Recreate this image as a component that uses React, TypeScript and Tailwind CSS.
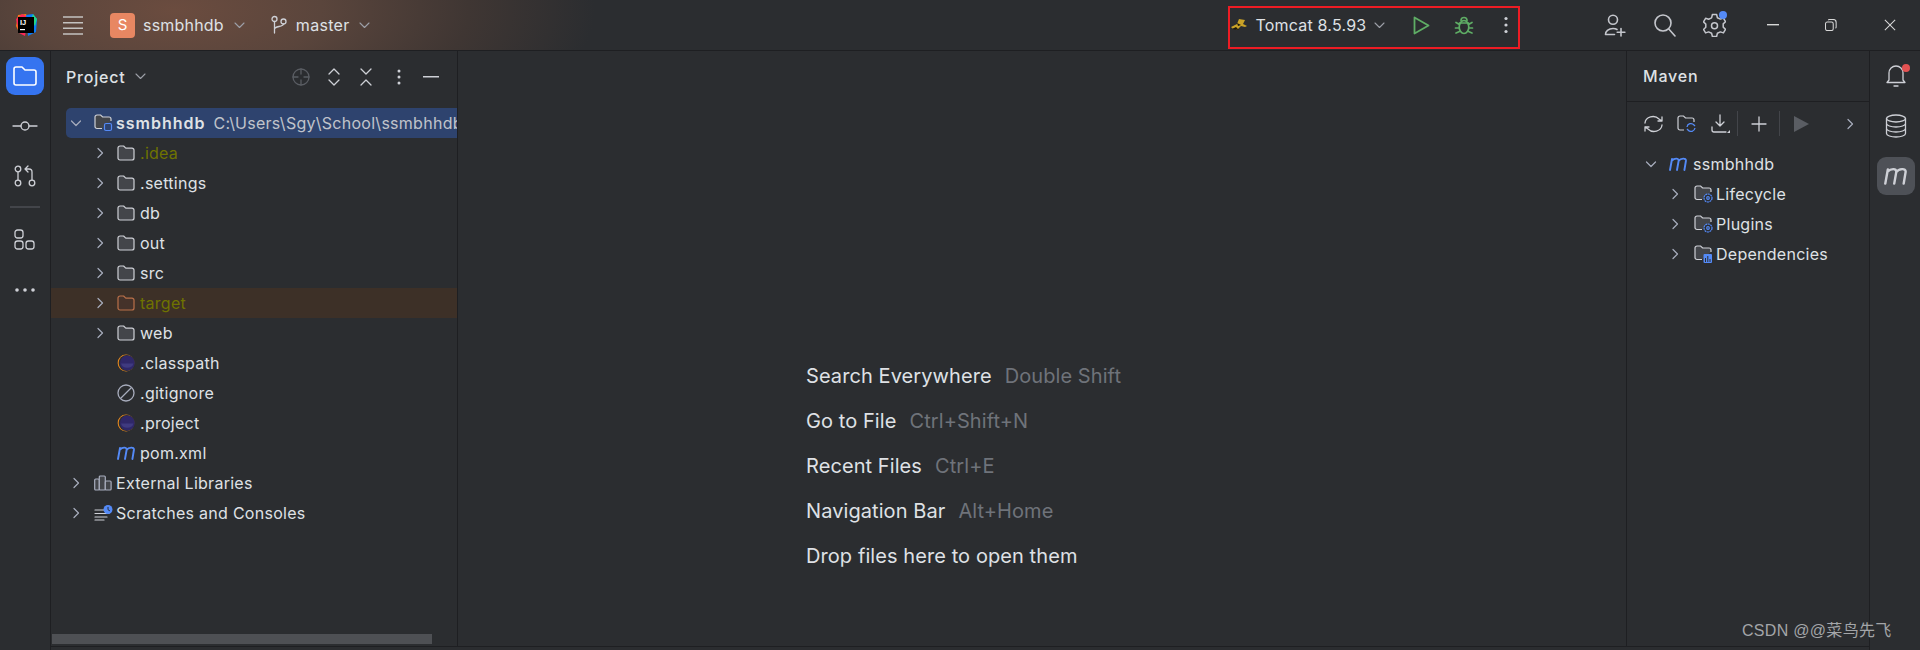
import React from "react";

const S = "#ced0d6";
type P = { className?: string };

const Svg = ({ w = 20, h = 20, vb, children, className }: { w?: number; h?: number; vb?: string; children: React.ReactNode; className?: string }) => (
  <svg width={w} height={h} viewBox={vb ?? `0 0 ${w} ${h}`} fill="none" stroke={S} strokeWidth={1.3} strokeLinecap="round" strokeLinejoin="round" className={`shrink-0 ${className ?? ""}`}>
    {children}
  </svg>
);

const Chevron = ({ open }: { open?: boolean }) => (
  <svg width={12} height={12} viewBox="0 0 12 12" fill="none" stroke="#a8adbd" strokeWidth={1.2} strokeLinecap="round" strokeLinejoin="round" className="shrink-0">
    {open ? <path d="M1.5 4 6 8.5 10.5 4" /> : <path d="M4 1.5 8.5 6 4 10.5" />}
  </svg>
);

const ChevDown = ({ className }: P) => (
  <svg width={11} height={7} viewBox="0 0 11 7" fill="none" stroke="#9da0a8" strokeWidth={1.1} strokeLinecap="round" strokeLinejoin="round" className={`shrink-0 ${className ?? ""}`}>
    <path d="M1 1 5.5 5.5 10 1" />
  </svg>
);

const Folder = ({ stroke = "#ced0d6", fill = "#43454a" }: { stroke?: string; fill?: string }) => (
  <svg width={18} height={16} viewBox="0 0 18 16" fill={fill} stroke={stroke} strokeWidth={1.2} strokeLinejoin="round" className="shrink-0">
    <path d="M1 3a2 2 0 0 1 2-2h3.6l2.2 2.2H15a2 2 0 0 1 2 2V13a2 2 0 0 1-2 2H3a2 2 0 0 1-2-2z" />
  </svg>
);

const BadgeFolder = ({ badge }: { badge: "module" | "gear" | "deps" }) => (
  <svg width={19} height={18} viewBox="0 0 19 18" fill="none" className="shrink-0">
    <path d="M8 14.5H3a2 2 0 0 1-2-2V3a2 2 0 0 1 2-2h3.6l2 2H15a2 2 0 0 1 2 2v2" stroke="#ced0d6" strokeWidth={1.2} fill="#43454a" />
    {badge === "module" && <rect x="10.5" y="9.5" width="7" height="7" rx="1.5" fill="#2e436e" stroke="#548af7" strokeWidth={1.2} />}
    {badge === "gear" && (
      <g stroke="#548af7" fill="#2b2d30" strokeWidth={1.2}>
        <circle cx="14" cy="13" r="4" strokeDasharray="2 0.6" />
        <circle cx="14" cy="13" r="1.3" />
      </g>
    )}
    {badge === "deps" && (
      <g fill="#548af7">
        <rect x="9.5" y="9" width="8.5" height="9" rx="1" />
        <path d="M11.5 17v-4M13.8 17v-6M16 17v-3" stroke="#2b2d30" strokeWidth={1} />
      </g>
    )}
  </svg>
);

const MavenM = ({ color = "#548af7", w = 18 }: { color?: string; w?: number }) => (
  <svg width={w} height={w * 0.75} viewBox="0 0 18 13.5" fill="none" stroke={color} strokeWidth={1.9} strokeLinecap="round" strokeLinejoin="round" className="shrink-0">
    <path d="M1 13 3 2M3 3.5C5 1.5 10 .4 9.600 4L8 13M9.600 4C11.500 1.400 17.400 .4 16.900 4L15.400 13" />
  </svg>
);

const Eclipse = () => (
  <svg width={18} height={18} viewBox="0 0 18 18" className="shrink-0">
    <circle cx="9" cy="9" r="8.4" fill="#e8891d" />
    <circle cx="9.7" cy="9" r="8" fill="#2b2d30" />
    <circle cx="10.3" cy="9" r="7.4" fill="#2f2768" />
    <path d="M4 9.5h12.5a6.5 6 0 0 1-12.5 0z" fill="#3f3a80" />
  </svg>
);

const Ignore = () => (
  <svg width={18} height={18} viewBox="0 0 18 18" fill="none" stroke="#a8adbd" strokeWidth={1.3} className="shrink-0">
    <circle cx="9" cy="9" r="8" />
    <path d="M3.5 14.5 14.5 3.5" />
  </svg>
);

const Libs = () => (
  <svg width={18} height={16} viewBox="0 0 18 16" fill="none" stroke="#a8adbd" strokeWidth={1.2} strokeLinejoin="round" className="shrink-0">
    <rect x=".7" y="4" width="4.6" height="11" rx="1" fill="#43454a" />
    <rect x="5.3" y="1" width="6" height="14" rx="1" fill="#43454a" />
    <rect x="11.3" y="6" width="5.8" height="9" rx="1" fill="#43454a" />
  </svg>
);

const Scratches = () => (
  <svg width={19} height={16} viewBox="0 0 19 16" fill="none" stroke="#ced0d6" strokeWidth={1.2} strokeLinecap="round" className="shrink-0">
    <path d="M1 5h9M1 8.5h14M1 12h12M1 15h9" />
    <circle cx="14" cy="4.5" r="4.5" fill="#548af7" stroke="none" />
    <path d="M14 2.3v2.4l1.6 1" stroke="#2b2d30" strokeWidth={1} />
  </svg>
);

const Row = ({ level, chevron, open, icon, active, children }: { level: 0 | 1; chevron?: boolean; open?: boolean; icon: React.ReactNode; active?: boolean; children: React.ReactNode }) => (
  <div className={`flex h-[30px] items-center whitespace-nowrap overflow-hidden ${level === 0 ? "pl-[19px]" : "pl-[43px]"} ${active ? "bg-[#3d3027]" : ""}`}>
    <span className="w-[12px] flex shrink-0">{chevron ? <Chevron open={open} /> : null}</span>
    <span className={`flex w-[18px] justify-center shrink-0 ${level === 0 ? "ml-[12px] mr-[4px]" : "ml-[11px] mr-[5px]"}`}>{icon}</span>
    {children}
  </div>
);

const TreeText = ({ children, olive }: { children: React.ReactNode; olive?: boolean }) => (
  <span className={`text-[16px] tracking-[0.27px] ${olive ? "text-[#6f7300]" : "text-[#dfe1e5]"}`}>{children}</span>
);

const Sep = () => <span className="w-px h-[25px] bg-[#43454a] shrink-0" />;

const Welcome = ({ a, b }: { a: string; b?: string }) => (
  <div className="h-[45px] flex items-center whitespace-nowrap text-[20px] tracking-[0.08px]">
    <span className="text-[#dfe1e5]">{a}</span>
    {b && <span className="text-[#6f737a] ml-[13px]">{b}</span>}
  </div>
);

const Rail = ({ children, className }: { children: React.ReactNode; className?: string }) => (
  <div className={`flex w-[38px] h-[38px] items-center justify-center rounded-[9px] ${className ?? ""}`}>{children}</div>
);

export default function App() {
  return (
    <div className="relative flex h-[650px] w-[1920px] flex-col overflow-hidden bg-[#2b2d30] font-['Inter','Noto_Sans',sans-serif]">
      {/* Title bar */}
      <div className="flex h-[51px] shrink-0 items-center border-b border-[#1e1f22] bg-[radial-gradient(ellipse_420px_170px_at_175px_10px,#6b4c3f_0%,#5a453c_35%,#3f3633_70%,#2b2d30_100%)]">
        <svg width={22} height={22} viewBox="0 0 22 22" className="ml-[15px] shrink-0">
          <path d="M3 1l8-1 2 3-9 15-3-6z" fill="#f97a12" />
          <path d="M1 5l6-5 6 3-3 19-6-3z" fill="#fe2857" />
          <path d="M11 1l7-1 4 5-1 13-8 4z" fill="#087cfa" />
          <path d="M18 0l4 5-2 7-4-6z" fill="#21d789" />
          <rect x="3" y="3" width="16" height="16" fill="#000" />
          <text x="5" y="11" fontSize="7.5" fontWeight="700" fill="#fff" fontFamily="Liberation Sans">IJ</text>
          <rect x="5" y="15" width="5" height="1.2" fill="#fff" />
        </svg>
        <svg width={20} height={20} viewBox="0 0 20 20" stroke="#c4c2c0" strokeWidth={1.6} className="ml-[26px] shrink-0">
          <path d="M0 2h20M0 7.7h20M0 13.3h20M0 19h20" />
        </svg>
        <div className="ml-[27px] flex h-[25px] w-[25px] items-center justify-center rounded-[4px] bg-[#e88762] text-[15px] text-white">S</div>
        <span className="ml-[8px] text-[16px] tracking-[0.2px] text-[#dfe1e5]">ssmbhhdb</span>
        <ChevDown className="ml-[10px]" />
        <Svg w={16} h={20} className="ml-[26px]">
          <circle cx="3.5" cy="4" r="2.5" />
          <circle cx="12.5" cy="6.5" r="2.5" />
          <path d="M3.5 6.5V18M3.5 14c0-3 9-2 9-5" />
        </Svg>
        <span className="ml-[9px] text-[16px] tracking-[0.3px] text-[#dfe1e5]">master</span>
        <ChevDown className="ml-[9px]" />
        <div className="ml-[858px] mt-[5px] flex h-[43px] w-[292px] shrink-0 items-center border-2 border-[#ed1c24] pb-[5px]">
          <svg width={16} height={14} viewBox="0 0 16 14" className="ml-[1px] shrink-0">
            <path d="M0 9l6-3 2-5 6 1-2 4 4 2-2 1-4-1-4 4-2-2-2 1z" fill="#c9a227" />
            <path d="M1 11l4-2 3 3zM6 5l4 2-3 1z" fill="#1a1608" />
          </svg>
          <span className="ml-[9px] whitespace-nowrap text-[16px] tracking-[0.2px] text-[#dfe1e5]">Tomcat 8.5.93</span>
          <ChevDown className="ml-[8px]" />
          <svg width={17} height={19} viewBox="0 0 17 19" fill="none" stroke="#5fad65" strokeWidth={1.8} strokeLinejoin="round" className="ml-[28px] shrink-0">
            <path d="M1.500 1.500 15.500 9.500 1.500 17.500z" />
          </svg>
          <svg width={20} height={19} viewBox="0 0 20 19" fill="none" stroke="#5fad65" strokeWidth={1.7} strokeLinecap="round" className="ml-[24px] shrink-0">
            <ellipse cx="10" cy="11" rx="4.800" ry="6.500" />
            <path d="M7 4.500c0-4 6-4 6 0M5.500 8.500 2 6.500M14.500 8.500 18 6.500M5 12H1.500M15 12h3.500M5.500 15.500 2 17M14.500 15.500 18 17M5.500 7h9" />
          </svg>
          <svg width={4} height={18} viewBox="0 0 4 18" fill="#ced0d6" className="ml-[30px] shrink-0">
            <circle cx="2" cy="2.5" r="1.6" /><circle cx="2" cy="9" r="1.6" /><circle cx="2" cy="15.5" r="1.6" />
          </svg>
        </div>
        <svg width={23} height={23} viewBox="0 0 23 23" fill="none" stroke="#c4c6cc" strokeWidth={1.6} strokeLinecap="round" strokeLinejoin="round" className="ml-[84px] shrink-0">
          <circle cx="9" cy="5.800" r="4.500" />
          <path d="M1.500 20.500c-.3-3 3-6 7.500-6 1.500 0 3 .3 4 1M1.500 20.500h9" />
          <path d="M17 14.500v7.500M13.200 18.200h7.700" />
        </svg>
        <svg width={22} height={23} viewBox="0 0 22 23" fill="none" stroke="#c4c6cc" strokeWidth={1.6} strokeLinecap="round" className="ml-[27px] shrink-0">
          <circle cx="9" cy="9" r="8" />
          <path d="M14.800 15 21 22" />
        </svg>
        <div className="relative ml-[27px] shrink-0">
          <svg width={23} height={24} viewBox="0 0 23 24" fill="none" stroke="#c4c6cc" strokeWidth={1.5} strokeLinejoin="round" className="shrink-0">
            <path d="M9.400 1.500h4.200l.8 3.200 3 1.400 3-1 2.100 3.600-2.300 2.200v3.200l2.300 2.200-2.100 3.600-3-1-3 1.400-.8 3.200H9.400l-.8-3.200-3-1.400-3 1L.5 16.500l2.300-2.200v-3.200L.5 8.900l2.100-3.600 3 1 3-1.400z" />
            <circle cx="11.500" cy="12.700" r="3" />
          </svg>
          <span className="absolute right-[-1px] top-[-2px] h-[8px] w-[8px] rounded-full bg-[#548af7]" />
        </div>
        <svg width={12} height={2} className="ml-[41px] shrink-0"><rect width="12" height="1.4" fill="#d8d8d8" /></svg>
        <svg width={12} height={12} viewBox="0 0 14 14" fill="none" stroke="#d8d8d8" strokeWidth={1.2} className="ml-[46px] shrink-0">
          <rect x=".6" y="3.500" width="9" height="10" rx="2" /><path d="M4 1.500c0-.6.5-1 1-1h4.500c2 0 3.500 1.500 3.500 3.500v5.500c0 .6-.4 1-1 1" />
        </svg>
        <svg width={12} height={12} viewBox="0 0 14 14" stroke="#d8d8d8" strokeWidth={1.2} className="ml-[47px] shrink-0">
          <path d="M1 1l12 12M13 1 1 13" />
        </svg>
      </div>

      {/* Body */}
      <div className="flex min-h-0 flex-1">
        {/* Left rail */}
        <div className="flex w-[51px] shrink-0 flex-col items-center border-r border-[#1e1f22] pt-[6px]">
          <Rail className="bg-[#3574f0]">
            <svg width={24} height={20} viewBox="0 0 24 20" fill="none" stroke="#fff" strokeWidth={1.6} strokeLinejoin="round">
              <path d="M1 3a2 2 0 0 1 2-2h6l3 3h9a2 2 0 0 1 2 2v11a2 2 0 0 1-2 2H3a2 2 0 0 1-2-2z" />
            </svg>
          </Rail>
          <div className="mt-[12px]">
            <Rail>
              <Svg w={26} h={12}>
                <circle cx="13" cy="6" r="4" />
                <path d="M1 6h8M17 6h8" />
              </Svg>
            </Rail>
          </div>
          <div className="mt-[12px]">
            <Rail>
              <Svg w={22} h={22}>
                <circle cx="4" cy="4" r="2.800" /><circle cx="4" cy="18" r="2.800" /><circle cx="18" cy="18" r="2.800" />
                <path d="M4 7v8M18 15V7c0-2-1-3-3-3h-3M14 1l-3 3 3 3" />
              </Svg>
            </Rail>
          </div>
          <div className="mt-[11px] h-[2px] w-[30px] bg-[#43454a]" />
          <div className="mt-[13px]">
            <Rail>
              <Svg w={22} h={22}>
                <rect x="1" y="1" width="8" height="8" rx="2.500" /><rect x="1" y="12" width="8" height="8" rx="2.500" /><rect x="12" y="12" width="8" height="8" rx="2.500" />
              </Svg>
            </Rail>
          </div>
          <div className="mt-[12px]">
            <Rail>
              <svg width={22} height={4} viewBox="0 0 22 4" fill="#ced0d6"><circle cx="3" cy="2" r="1.800" /><circle cx="11" cy="2" r="1.800" /><circle cx="19" cy="2" r="1.800" /></svg>
            </Rail>
          </div>
        </div>

        {/* Center */}
        <div className="flex min-w-0 flex-1 flex-col border-r border-[#1e1f22] pb-[3px]">
          <div className="flex min-h-0 flex-1 border-b border-[#1e1f22]">
            {/* Project */}
            <div className="flex w-[407px] shrink-0 flex-col border-r border-[#1e1f22] overflow-hidden">
              <div className="flex h-[51px] shrink-0 items-center pl-[15px]">
                <span className="text-[16px] font-medium tracking-[0.8px] text-[#dfe1e5]">Project</span>
                <ChevDown className="ml-[9px]" />
                <Svg w={18} h={18} className="ml-[146px]">
                  <g stroke="#5a5d63">
                    <circle cx="9" cy="9" r="8" />
                    <path d="M9 1v5M9 12v5M1 9h5M12 9h5" />
                  </g>
                </Svg>
                <Svg w={12} h={18} className="ml-[18px]"><path d="M1 6l5-5 5 5M1 12l5 5 5-5" /></Svg>
                <Svg w={12} h={18} className="ml-[20px]"><path d="M1 1l5 5 5-5M1 17l5-5 5 5" /></Svg>
                <svg width={4} height={16} viewBox="0 0 4 16" fill="#ced0d6" className="ml-[25px] shrink-0"><circle cx="2" cy="2" r="1.500" /><circle cx="2" cy="8" r="1.500" /><circle cx="2" cy="14" r="1.500" /></svg>
                <svg width={16} height={2} className="ml-[22px] shrink-0"><rect width="16" height="1.500" fill="#ced0d6" /></svg>
              </div>
              <div className="min-h-0 flex-1 pt-[6px]">
                <div className="ml-[15px] flex h-[30px] items-center overflow-hidden whitespace-nowrap rounded-l-[5px] bg-[#2e436e] pl-[4px]">
                  <span className="flex w-[12px] shrink-0"><Chevron open /></span>
                  <span className="ml-[12px] mr-[3px] flex w-[19px] shrink-0"><BadgeFolder badge="module" /></span>
                  <span className="text-[16px] font-semibold tracking-[1px] text-[#dfe1e5]">ssmbhhdb</span>
                  <span className="ml-[8px] text-[16px] tracking-[0.27px] text-[#c0c3cb]">C:\Users\Sgy\School\ssmbhhdb</span>
                </div>
                <Row level={1} chevron icon={<Folder />}><TreeText olive>.idea</TreeText></Row>
                <Row level={1} chevron icon={<Folder />}><TreeText>.settings</TreeText></Row>
                <Row level={1} chevron icon={<Folder />}><TreeText>db</TreeText></Row>
                <Row level={1} chevron icon={<Folder />}><TreeText>out</TreeText></Row>
                <Row level={1} chevron icon={<Folder />}><TreeText>src</TreeText></Row>
                <Row level={1} chevron active icon={<Folder stroke="#b9704a" fill="#45322a" />}><TreeText olive>target</TreeText></Row>
                <Row level={1} chevron icon={<Folder />}><TreeText>web</TreeText></Row>
                <Row level={1} icon={<Eclipse />}><TreeText>.classpath</TreeText></Row>
                <Row level={1} icon={<Ignore />}><TreeText>.gitignore</TreeText></Row>
                <Row level={1} icon={<Eclipse />}><TreeText>.project</TreeText></Row>
                <Row level={1} icon={<MavenM />}><TreeText>pom.xml</TreeText></Row>
                <Row level={0} chevron icon={<Libs />}><TreeText>External Libraries</TreeText></Row>
                <Row level={0} chevron icon={<Scratches />}><TreeText>Scratches and Consoles</TreeText></Row>
              </div>
              <div className="mb-[2px] ml-[1px] h-[10px] w-[380px] shrink-0 bg-[#4e5054]" />
            </div>

            {/* Editor */}
            <div className="min-w-0 flex-1 pl-[348px] pt-[302px]">
              <Welcome a="Search Everywhere" b="Double Shift" />
              <Welcome a="Go to File" b="Ctrl+Shift+N" />
              <Welcome a="Recent Files" b="Ctrl+E" />
              <Welcome a="Navigation Bar" b="Alt+Home" />
              <Welcome a="Drop files here to open them" />
            </div>

            {/* Maven */}
            <div className="w-[243px] shrink-0 border-l border-[#1e1f22]">
              <div className="flex h-[51px] items-center border-b border-[#1e1f22] pl-[16px]">
                <span className="text-[16px] font-medium tracking-[0.8px] text-[#dfe1e5]">Maven</span>
              </div>
              <div className="flex h-[43px] items-center pl-[17px]">
                <Svg w={20} h={18}>
                  <path d="M1 8a8 7 0 0 1 14-4l3 2M18 10a8 7 0 0 1-14 4l-3-2M18 2v4h-4M1 16v-4h4" />
                </Svg>
                <svg width={19} height={18} viewBox="0 0 19 18" fill="none" className="ml-[13px] shrink-0">
                  <path d="M7 15H3a2 2 0 0 1-2-2V3a2 2 0 0 1 2-2h3.500l2 2H15a2 2 0 0 1 2 2v2" stroke="#ced0d6" strokeWidth={1.200} />
                  <path d="M10 12a4 4 0 0 1 7-2l1 1M18 13a4 4 0 0 1-7 2l-1-1" stroke="#548af7" strokeWidth={1.300} />
                </svg>
                <Svg w={20} h={20} className="ml-[15px]">
                  <path d="M9 1v11M5 8l4 4 4-4M1 13v3a2 2 0 0 0 2 2h12" />
                  <path d="M19 16v3h-3z" fill="#ced0d6" stroke="none" />
                </Svg>
                <span className="ml-[6px] flex"><Sep /></span>
                <Svg w={16} h={16} className="ml-[13px]"><path d="M8 1v14M1 8h14" /></Svg>
                <span className="ml-[12px] flex"><Sep /></span>
                <svg width={16} height={16} viewBox="0 0 16 16" fill="#5a5d63" className="ml-[13px] shrink-0"><path d="M1 0l15 8-15 8z" /></svg>
                <span className="ml-[35px] flex"><Chevron /></span>
              </div>
              <div className="pt-[4px]">
                {[
                  { t: "ssmbhhdb", root: true },
                  { t: "Lifecycle", b: "gear" as const },
                  { t: "Plugins", b: "gear" as const },
                  { t: "Dependencies", b: "deps" as const },
                ].map((r) => (
                  <div key={r.t} className={`flex h-[30px] items-center ${r.root ? "pl-[18px]" : "pl-[42px]"}`}>
                    <span className="flex w-[12px] shrink-0"><Chevron open={r.root} /></span>
                    {r.root ? (
                      <span className="ml-[12px] mr-[5px] flex w-[19px] shrink-0"><MavenM /></span>
                    ) : (
                      <span className="ml-[13px] mr-[3px] flex w-[19px] shrink-0"><BadgeFolder badge={r.b!} /></span>
                    )}
                    <TreeText>{r.t}</TreeText>
                  </div>
                ))}
              </div>
            </div>
          </div>
        </div>

        {/* Right rail */}
        <div className="flex w-[50px] shrink-0 flex-col items-center pt-[6px] pl-[1px]">
          <div className="relative flex h-[38px] w-[38px] items-center justify-center">
            <Svg w={22} h={24}>
              <path d="M4 16V9a7 7 0 0 1 14 0v7l2 2.500H2z" />
              <path d="M9 22h4" />
            </Svg>
            <span className="absolute right-[5px] top-[7px] h-[8px] w-[8px] rounded-full bg-[#e35252]" />
          </div>
          <div className="mt-[12px] flex h-[38px] w-[38px] items-center justify-center">
            <Svg w={22} h={24}>
              <ellipse cx="11" cy="4.500" rx="9.500" ry="3.500" />
              <path d="M1.500 4.500v15c0 2 4.500 3.500 9.500 3.500s9.500-1.500 9.500-3.500v-15M1.500 9.500c0 2 4.500 3.500 9.500 3.500s9.500-1.500 9.500-3.500M1.500 14.500c0 2 4.500 3.500 9.500 3.500s9.500-1.500 9.500-3.500" />
            </Svg>
          </div>
          <div className="mt-[12px] flex h-[38px] w-[38px] items-center justify-center rounded-[9px] bg-[#4e5157]">
            <MavenM color="#ced0d6" w={23} />
          </div>
        </div>
      </div>

      <span className="absolute left-[1742px] top-[619px] whitespace-nowrap text-[16px] tracking-[0.3px] text-[#a3a5a8] font-['Liberation_Sans','Noto_Sans_CJK_SC',sans-serif]">CSDN @@菜鸟先飞</span>
    </div>
  );
}
